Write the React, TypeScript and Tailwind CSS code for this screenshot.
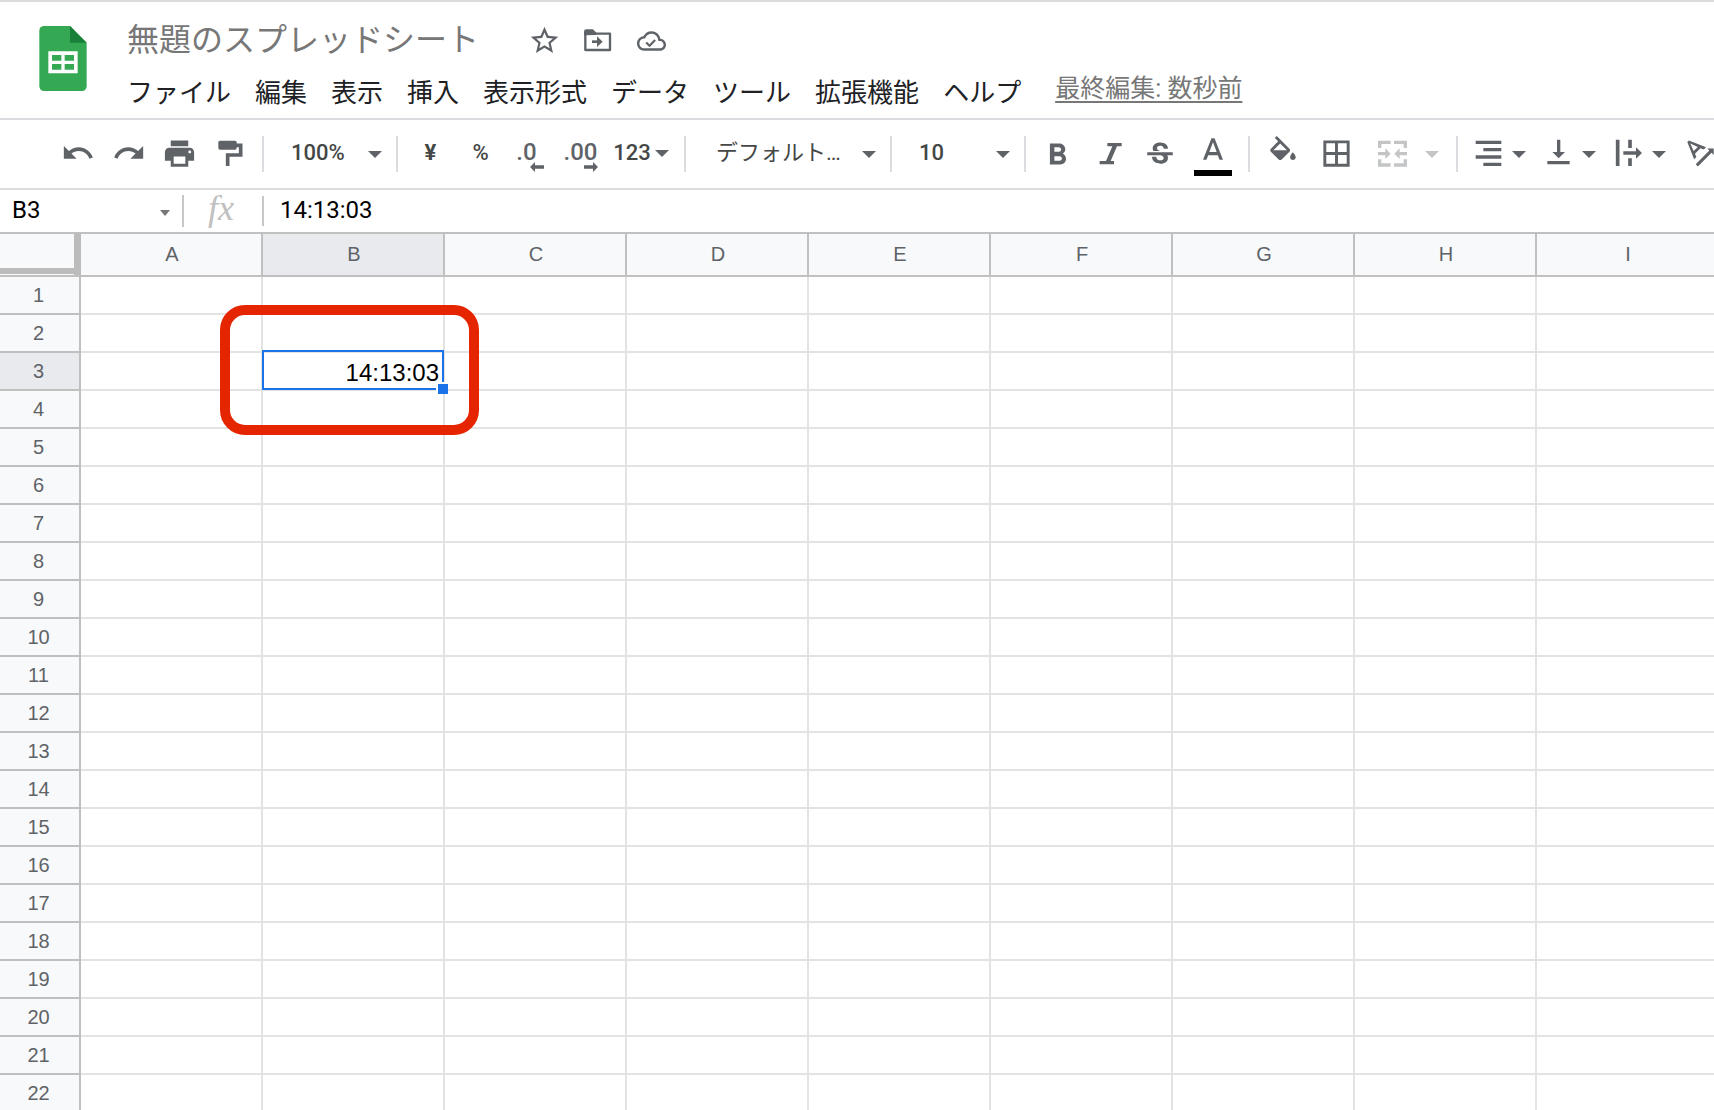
import React from "react";

const COLUMNS = ["A", "B", "C", "D", "E", "F", "G", "H", "I"];
const ROWS = Array.from({ length: 22 }, (_, i) => i + 1);
const MENUS = ["ファイル", "編集", "表示", "挿入", "表示形式", "データ", "ツール", "拡張機能", "ヘルプ"];

function SheetsLogo() {
  return (
    <svg viewBox="0 0 142 195" className="h-[65px] w-12" aria-hidden="true">
      <path
        d="M14 0H92L142 50V181a14 14 0 0 1-14 14H14A14 14 0 0 1 0 181V14A14 14 0 0 1 14 0Z"
        fill="#34a853"
      />
      <path d="M92 0L142 50H92Z" fill="#188038" />
      <path
        fillRule="evenodd"
        d="M27 76H115V142H27ZM38 87V104H66V87ZM76 87V104H104V87ZM38 114V131H66V114ZM76 114V131H104V114Z"
        fill="#fff"
      />
    </svg>
  );
}

function Svg({ box, className, children }: { box: string; className: string; children: React.ReactNode }) {
  return (
    <svg viewBox={box} className={"shrink-0 " + className} fill="currentColor" aria-hidden="true">
      {children}
    </svg>
  );
}

function Caret() {
  return (
    <svg viewBox="0 0 14 7" className="h-[7px] w-[14px] shrink-0" fill="currentColor" aria-hidden="true">
      <path d="M0 0H14L7 7Z" />
    </svg>
  );
}

function Separator({ wide = false }: { wide?: boolean }) {
  return <div className={(wide ? "mx-2" : "mx-[6px]") + " h-9 w-[2px] shrink-0 bg-[#dadce0]"} />;
}

function Tool({ label, className = "w-[51px] pb-[2px]", children }: { label: string; className?: string; children: React.ReactNode }) {
  return (
    <button type="button" aria-label={label} className={"flex h-12 shrink-0 items-center justify-center " + className}>
      {children}
    </button>
  );
}

function SplitTool({ label, children }: { label: string; children: React.ReactNode }) {
  return (
    <button type="button" aria-label={label} className="flex h-12 w-[70px] shrink-0 items-center pb-[2px]">
      <span className="flex w-11 justify-center">{children}</span>
      <span className="pt-[2px] pl-[2px]">
        <Caret />
      </span>
    </button>
  );
}

function Picker({ label, value, className, selectClass }: { label: string; value: string; className: string; selectClass: string }) {
  return (
    <div className={"relative h-12 shrink-0 " + className}>
      <select
        aria-label={label}
        defaultValue={value}
        className={"h-full w-full appearance-none bg-transparent pb-1 text-[#444746] outline-none " + selectClass}
      >
        <option>{value}</option>
      </select>
      <span className="pointer-events-none absolute top-[21px] right-2">
        <Caret />
      </span>
    </div>
  );
}

function Header() {
  return (
    <header className="flex h-[120px] shrink-0 border-t-2 border-b-2 border-t-[#dcdcdc] border-b-[#dadce0]">
      <div className="w-[127px] shrink-0 pt-6 pl-[39px]">
        <SheetsLogo />
      </div>
      <div className="flex flex-col pt-4">
        <div className="flex h-11 items-center text-[#5f6368]">
          <input
            aria-label="名前の変更"
            defaultValue="無題のスプレッドシート"
            className="h-11 w-[401px] bg-transparent text-[32px] leading-[44px] text-[#777] outline-none"
          />
          <div className="flex items-center gap-5">
            <button type="button" aria-label="スター">
              <Svg box="0 0 24 24" className="size-[33px]">
                <path d="M22 9.24l-7.19-.62L12 2 9.19 8.63 2 9.24l5.46 4.73L5.82 21 12 17.27 18.18 21l-1.63-7.03L22 9.24zM12 15.4l-3.76 2.27 1-4.28-3.32-2.88 4.38-.38L12 6.1l1.71 4.04 4.38.38-3.32 2.88 1 4.28L12 15.4z" />
              </Svg>
            </button>
            <button type="button" aria-label="移動">
              <Svg box="0 0 99 99" className="size-[33px]">
                <path d="M13 26V78H87V29H44" fill="none" stroke="currentColor" strokeWidth="7" strokeLinejoin="round" />
                <path d="M9 34V23a7 7 0 0 1 7-7H36L46 26V33Z" />
                <path d="M33 53H54" fill="none" stroke="currentColor" strokeWidth="8" />
                <path d="M48 37L65 53L48 69Z" />
              </Svg>
            </button>
            <button type="button" aria-label="保存済み" className="pt-[2px] pl-[3px]">
              <Svg box="0 3 24 18" className="h-[22px] w-[29px]">
                <path d="M19.35 10.04C18.67 6.59 15.64 4 12 4 9.11 4 6.6 5.64 5.35 8.04 2.34 8.36 0 10.91 0 14c0 3.31 2.69 6 6 6h13c2.76 0 5-2.24 5-5 0-2.64-2.05-4.78-4.65-4.96zM19 18H6c-2.21 0-4-1.79-4-4 0-2.05 1.53-3.76 3.56-3.97l1.07-.11.5-.95C8.08 7.14 9.94 6 12 6c2.62 0 4.88 1.86 5.39 4.43l.3 1.5 1.53.11c1.56.1 2.78 1.41 2.78 2.96 0 1.65-1.35 3-3 3z" />
                <path d="M7.6 13.2L10.4 15.9L15 11.2" fill="none" stroke="currentColor" strokeWidth="1.8" />
              </Svg>
            </button>
          </div>
        </div>
        <nav className="flex h-14 items-center gap-6 pt-[6px] text-[26px] leading-9 text-[#202124]">
          {MENUS.map((m) => (
            <button key={m} type="button" className="shrink-0 whitespace-nowrap">
              {m}
            </button>
          ))}
          <a href="#history" className="shrink-0 pb-2 pl-[10px] text-[25px] whitespace-nowrap text-[#777] underline underline-offset-4">
            最終編集: 数秒前
          </a>
        </nav>
      </div>
    </header>
  );
}

function Toolbar() {
  return (
    <div
      role="toolbar"
      aria-label="メイン"
      className="flex h-[70px] shrink-0 items-center overflow-hidden border-b-2 border-[#dadce0] pl-[52px] text-[22px] font-medium text-[#5f6368]"
    >
      <Tool label="元に戻す">
        <Svg box="0 0 24 24" className="size-[34px]">
          <path d="M12.5 8c-2.65 0-5.05.99-6.9 2.6L2 7v9h9l-3.62-3.62c1.39-1.16 3.16-1.88 5.12-1.88 3.54 0 6.55 2.31 7.6 5.5l2.37-.78C21.08 11.03 17.15 8 12.5 8z" />
        </Svg>
      </Tool>
      <Tool label="やり直し">
        <Svg box="0 0 24 24" className="size-[34px]">
          <path d="M18.4 10.6C16.55 8.99 14.15 8 11.5 8c-4.65 0-8.58 3.03-9.96 7.22L3.9 16c1.05-3.19 4.05-5.5 7.6-5.5 1.95 0 3.73.72 5.12 1.88L13 16h9V7l-3.6 3.6z" />
        </Svg>
      </Tool>
      <Tool label="印刷">
        <Svg box="0 0 24 24" className="size-[35px]">
          <path d="M19 8H5c-1.66 0-3 1.34-3 3v6h4v4h12v-4h4v-6c0-1.66-1.34-3-3-3zm-3 11H8v-5h8v5zm3-7c-.55 0-1-.45-1-1s.45-1 1-1 1 .45 1 1-.45 1-1 1zm-1-9H6v4h12V3z" />
        </Svg>
      </Tool>
      <Tool label="書式を貼り付け">
        <Svg box="0 0 99 99" className="size-[33px]">
          <rect x="13" y="11" width="55" height="27" rx="5" />
          <path d="M66 25H80V54H41V87" fill="none" stroke="currentColor" strokeWidth="11" />
        </Svg>
      </Tool>
      <Separator />
      <Picker label="ズーム" value="100%" className="w-[120px]" selectClass="pl-[21px]" />
      <Separator />
      <Tool label="通貨" className="w-[51px] pb-1 text-[#444746]">
        <span className="pl-[2px] font-bold">¥</span>
      </Tool>
      <Tool label="パーセント" className="w-[51px] pb-1 text-[#444746]">
        %
      </Tool>
      <Tool label="小数点以下の桁数を減らす" className="relative w-[51px] pb-1">
        <span className="pr-[10px] text-[24px]">.0</span>
        <span className="absolute top-8 left-6">
          <Svg box="0 0 42 30" className="h-[10px] w-[14px]">
            <path d="M0 15L15 0V10H42V20H15V30Z" />
          </Svg>
        </span>
      </Tool>
      <Tool label="小数点以下の桁数を増やす" className="relative w-[51px] pb-1">
        <span className="pr-1 text-[24px]">.00</span>
        <span className="absolute top-8 left-[27px]">
          <Svg box="0 0 42 30" className="h-[10px] w-[14px]">
            <path d="M42 15L27 0V10H0V20H27V30Z" />
          </Svg>
        </span>
      </Tool>
      <Tool label="表示形式の詳細" className="w-[70px] gap-1 pr-1 pb-[2px]">
        <span className="pb-[2px] text-[#444746]">123</span>
        <Caret />
      </Tool>
      <Separator />
      <Picker label="フォント" value="デフォルト…" className="w-48" selectClass="pl-6 font-normal" />
      <Separator />
      <Picker label="フォントサイズ" value="10" className="w-[120px]" selectClass="pl-[21px]" />
      <Separator />
      <Tool label="太字" className="w-[52px]">
        <Svg box="0.4 -1 24 24" className="size-9">
          <path d="M15.6 10.79c.97-.67 1.65-1.77 1.65-2.79 0-2.26-1.75-4-4-4H7v14h7.04c2.09 0 3.71-1.7 3.71-3.79 0-1.52-.86-2.82-2.15-3.42zM10 6.5h3c.83 0 1.5.67 1.5 1.5s-.67 1.5-1.5 1.5h-3v-3zm3.5 9H10v-3h3.5c.83 0 1.5.67 1.5 1.5s-.67 1.5-1.5 1.5z" />
        </Svg>
      </Tool>
      <Tool label="斜体" className="w-[52px] pb-[2px]">
        <Svg box="0 0 99 99" className="size-[33px]">
          <path d="M40 18H83V28H69L50 72H60V82H17V72H36L55 28H40Z" />
        </Svg>
      </Tool>
      <Tool label="取り消し線" className="w-12 pb-[2px]">
        <Svg box="0 -1.5 24 24" className="size-[34px]">
          <path d="M6.85 7.08C6.85 4.37 9.45 3 12.24 3c1.64 0 3 .49 3.9 1.28.77.65 1.46 1.73 1.46 3.24h-3.01c0-.31-.05-.59-.15-.85-.29-.86-1.2-1.28-2.25-1.28-1.86 0-2.34 1.02-2.34 1.7 0 .48.25.88.74 1.21.38.25.77.48 1.41.7H7.39c-.21-.34-.54-.89-.54-1.92zM21 12v-2H3v2h9.62c1.15.45 1.96.75 1.96 1.97 0 1-.81 1.67-2.28 1.67-1.54 0-2.93-.54-2.93-2.51H6.4c0 .55.08 1.13.24 1.58.81 2.29 3.29 3.3 5.67 3.3 2.27 0 5.3-.89 5.3-4.05 0-.3-.01-1.16-.48-1.94H21V12z" />
        </Svg>
      </Tool>
      <Tool label="テキストの色" className="w-14 flex-col gap-[10px] pt-[6px] pl-[2px]">
        <Svg box="5.5 2 13 14" className="h-[22px] w-5">
          <path d="M11 2L5.5 16h2.25l1.12-3h6.25l1.12 3h2.25L13 2h-2zm-1.38 9L12 4.67 14.38 11H9.62z" />
        </Svg>
        <span className="h-[6px] w-[38px] bg-black" />
      </Tool>
      <Separator wide />
      <Tool label="塗りつぶしの色" className="w-[51px] pr-[2px] pb-[2px]">
        <Svg box="0 0 24 24" className="size-[34px]">
          <path d="M16.56 8.94L7.62 0 6.21 1.41l2.38 2.38-5.15 5.15c-.59.59-.59 1.54 0 2.12l5.5 5.5c.29.29.68.44 1.06.44s.77-.15 1.06-.44l5.5-5.5c.59-.58.59-1.53 0-2.12zM5.21 10L10 5.21 14.79 10H5.21zM19 11.5s-2 2.17-2 3.5c0 1.1.9 2 2 2s2-.9 2-2c0-1.33-2-3.5-2-3.5z" />
        </Svg>
      </Tool>
      <Tool label="枠線" className="w-[54px] pb-[2px]">
        <Svg box="0 0 24 24" className="size-[35px]">
          <path d="M3 3v18h18V3H3zm8 16H5v-6h6v6zm0-8H5V5h6v6zm8 8h-6v-6h6v6zm0-8h-6V5h6v6z" />
        </Svg>
      </Tool>
      <Tool label="セルを結合" className="w-[85px] gap-4 pb-[2px] pl-1 text-[#c4c5c7]">
        <Svg box="0 0 99 99" className="size-[33px]">
          <path
            d="M44 16H11V33M54 16H88V33M44 84H11V67M54 84H88V67M6 50H32M93 50H67"
            fill="none"
            stroke="currentColor"
            strokeWidth="10"
          />
          <path d="M28 34L44 50L28 66ZM71 34L55 50L71 66Z" />
        </Svg>
        <span className="pt-[2px]">
          <Caret />
        </span>
      </Tool>
      <Separator wide />
      <SplitTool label="水平方向の配置">
        <Svg box="0 0 99 99" className="size-[33px]">
          <path d="M11 16H88M34 38H88M11 60H88M34 82H88" fill="none" stroke="currentColor" strokeWidth="10" />
        </Svg>
      </SplitTool>
      <SplitTool label="垂直方向の配置">
        <Svg box="0 0 99 99" className="size-[33px]">
          <path d="M50 8V48M16 77H83" fill="none" stroke="currentColor" strokeWidth="10" />
          <path d="M31 45H69L50 64Z" />
        </Svg>
      </SplitTool>
      <SplitTool label="テキストの折り返し">
        <Svg box="0 0 99 99" className="size-[33px]">
          <path d="M17 8V87M54 8V33M54 64V87M34 48H75" fill="none" stroke="currentColor" strokeWidth="11" />
          <path d="M72 31L90 48L72 65Z" />
        </Svg>
      </SplitTool>
      <Tool label="テキストの回転" className="w-12 pb-1">
        <Svg box="0 0 24 24" className="size-[37px]">
          <path d="M4.49 4.21L3.43 5.27 7.85 16.4l1.48-1.48-.92-2.19 3.54-3.54 2.19.92 1.48-1.48L4.49 4.21zm3.09 6.8L5.36 6.14l4.87 2.23-2.65 2.64zm12.99-1.68h-4.24l1.41 1.41-8.84 8.84L10.32 21l8.84-8.84 1.41 1.41V9.33z" />
        </Svg>
      </Tool>
    </div>
  );
}

function FormulaBar() {
  return (
    <div className="flex h-[42px] shrink-0 items-center text-[24px] text-black">
      <input aria-label="名前ボックス" defaultValue="B3" className="h-10 w-40 shrink-0 bg-transparent pb-[2px] pl-3 outline-none" />
      <button type="button" aria-label="名前付き範囲" className="flex w-[22px] shrink-0 pt-1 text-[#777]">
        <svg viewBox="0 0 10 6" className="h-[6px] w-[10px]" fill="currentColor" aria-hidden="true">
          <path d="M0 0H10L5 6Z" />
        </svg>
      </button>
      <div className="h-8 w-[2px] shrink-0 bg-[#c8c8c8]" />
      <label
        htmlFor="formula"
        className="w-[78px] shrink-0 pr-1 pb-[6px] text-center font-['Liberation_Serif',serif] text-[36px] leading-[36px] text-[#c0c0c0] italic"
      >
        fx
      </label>
      <div className="h-[30px] w-[2px] shrink-0 bg-[#c8c8c8]" />
      <input id="formula" defaultValue="14:13:03" className="h-10 min-w-0 grow bg-transparent pb-[2px] pl-4 outline-none" />
    </div>
  );
}

function SelectedCell() {
  return (
    <td className="relative h-[38px] border-r-2 border-b-2 border-[#e2e3e3] p-0 pt-[3px] pr-1 text-right text-[24px] leading-[33px] text-black">
      14:13:03
      <span className="absolute -top-[3px] -right-[1px] -bottom-[1px] -left-[1px] border-2 border-[#1a73e8]" />
      <span className="absolute -right-[5px] -bottom-[5px] size-3 border-t-2 border-l-2 border-white bg-[#1a73e8]" />
      <span className="absolute -top-12 -left-[43px] h-[130px] w-[259px] rounded-[25px] border-[10px] border-[#e52500]" />
    </td>
  );
}

function Grid() {
  return (
    <main className="min-h-0 grow overflow-hidden border-t-2 border-[#c0c0c0]">
      <table className="w-[1719px] table-fixed border-separate border-spacing-0 font-['Liberation_Sans',Arial,sans-serif] text-[20px] leading-[24px] text-[#5f6368]">
        <colgroup>
          <col className="w-[81px]" />
          {COLUMNS.map((c) => (
            <col key={c} className="w-[182px]" />
          ))}
        </colgroup>
        <thead>
          <tr>
            <th aria-label="すべて選択" className="h-[43px] border-b-2 border-[#c0c0c0] bg-[#f8f9fa] p-0 align-top">
              <div className="h-[41px] border-r-[7px] border-[#bcbcbc]">
                <div className="h-10 border-b-[6px] border-[#bcbcbc]" />
              </div>
            </th>
            {COLUMNS.map((c) => (
              <th
                key={c}
                scope="col"
                className={
                  "h-[43px] border-r-2 border-b-2 border-[#c0c0c0] p-0 pb-[2px] pl-[2px] font-normal " +
                  (c === "B" ? "bg-[#e8eaed]" : "bg-[#f8f9fa]")
                }
              >
                {c}
              </th>
            ))}
          </tr>
        </thead>
        <tbody>
          {ROWS.map((r) => (
            <tr key={r}>
              <th
                scope="row"
                className={
                  "h-[38px] border-r-2 border-b-2 border-[#c0c0c0] p-0 pr-[2px] font-normal " +
                  (r === 3 ? "bg-[#e8eaed]" : "bg-[#f8f9fa]")
                }
              >
                {r}
              </th>
              {COLUMNS.map((c) =>
                r === 3 && c === "B" ? (
                  <SelectedCell key={c} />
                ) : (
                  <td key={c} className="h-[38px] border-r-2 border-b-2 border-[#e2e3e3] p-0" />
                ),
              )}
            </tr>
          ))}
        </tbody>
      </table>
    </main>
  );
}

export default function App() {
  return (
    <div className="flex h-screen flex-col overflow-hidden bg-white font-[Roboto,'Noto_Sans_CJK_JP',sans-serif]">
      <Header />
      <Toolbar />
      <FormulaBar />
      <Grid />
    </div>
  );
}
